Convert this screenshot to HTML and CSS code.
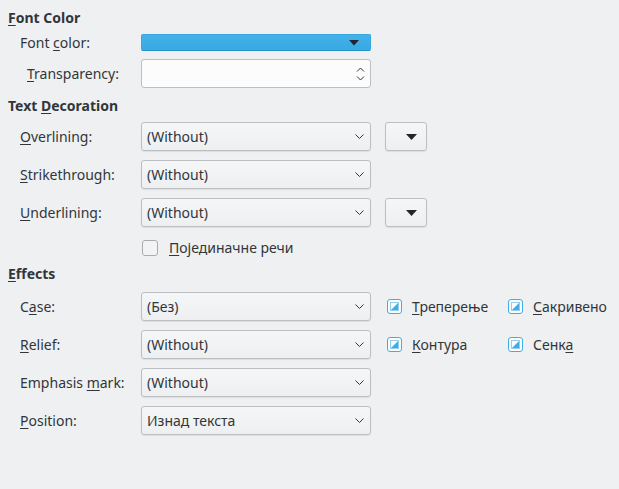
FILE: index.html
```html
<!DOCTYPE html>
<html>
<head>
<meta charset="utf-8">
<link rel="stylesheet" href="styles.css">
</head>
<body>
<div class="panel">
  <div class="heading h-first"><u>F</u>ont Color</div>
  <div class="row r-color">
    <span class="lbl">Font <u>c</u>olor:</span>
    <div class="colorbtn">
      <svg class="tri" width="10" height="6" viewBox="0 0 10 6"><path d="M0 0H10L5 5.5Z" fill="#232629"/></svg>
    </div>
  </div>
  <div class="row r-field r-trans">
    <span class="lbl lbl-indent"><u>T</u>ransparency:</span>
    <div class="spin">
      <svg class="spinarrows" width="9" height="16" viewBox="0 0 9 16"><path d="M1 5.5L4.5 2L8 5.5M1 10.5L4.5 14L8 10.5" fill="none" stroke="#31363b" stroke-width="1"/></svg>
    </div>
  </div>

  <div class="heading h-td">Text <u>D</u>ecoration</div>
  <div class="row r-field r-first">
    <span class="lbl"><u>O</u>verlining:</span>
    <div class="combo"><span class="val">(Without)</span><svg class="chev" width="9" height="5" viewBox="0 0 9 5"><path d="M0.5 0.5L4.5 4.5L8.5 0.5" fill="none" stroke="#31363b"/></svg></div>
    <div class="smallbtn"><svg width="11" height="6" viewBox="0 0 11 6"><path d="M0 0H11L5.5 6Z" fill="#232629"/></svg></div>
  </div>
  <div class="row r-field">
    <span class="lbl"><u>S</u>trikethrough:</span>
    <div class="combo"><span class="val">(Without)</span><svg class="chev" width="9" height="5" viewBox="0 0 9 5"><path d="M0.5 0.5L4.5 4.5L8.5 0.5" fill="none" stroke="#31363b"/></svg></div>
  </div>
  <div class="row r-field">
    <span class="lbl"><u>U</u>nderlining:</span>
    <div class="combo"><span class="val">(Without)</span><svg class="chev" width="9" height="5" viewBox="0 0 9 5"><path d="M0.5 0.5L4.5 4.5L8.5 0.5" fill="none" stroke="#31363b"/></svg></div>
    <div class="smallbtn"><svg width="11" height="6" viewBox="0 0 11 6"><path d="M0 0H11L5.5 6Z" fill="#232629"/></svg></div>
  </div>
  <div class="row r-check">
    <span class="lbl"></span>
    <span class="cb"></span>
    <span class="cblabel"><u>П</u>ојединачне речи</span>
  </div>

  <div class="heading h-eff"><u>E</u>ffects</div>
  <div class="row r-field r-first2">
    <span class="lbl">C<u>a</u>se:</span>
    <div class="combo"><span class="val">(Без)</span><svg class="chev" width="9" height="5" viewBox="0 0 9 5"><path d="M0.5 0.5L4.5 4.5L8.5 0.5" fill="none" stroke="#31363b"/></svg></div>
    <div class="checks">
      <span class="chk"><svg class="tri-cb" width="15" height="15" viewBox="0 0 15 15"><rect x="0.5" y="0.5" width="14" height="14" rx="2.5" fill="#fcfcfc" stroke="#3daee9"/><rect x="3.5" y="3.5" width="8" height="8" fill="none" stroke="#93cef0" stroke-width="1"/><path d="M4 11L11 11L11 4Z" fill="#3daee9"/></svg><span class="cbt"><u>Т</u>реперење</span></span>
      <span class="chk"><svg class="tri-cb" width="15" height="15" viewBox="0 0 15 15"><rect x="0.5" y="0.5" width="14" height="14" rx="2.5" fill="#fcfcfc" stroke="#3daee9"/><rect x="3.5" y="3.5" width="8" height="8" fill="none" stroke="#93cef0" stroke-width="1"/><path d="M4 11L11 11L11 4Z" fill="#3daee9"/></svg><span class="cbt"><u>С</u>акривено</span></span>
    </div>
  </div>
  <div class="row r-field">
    <span class="lbl"><u>R</u>elief:</span>
    <div class="combo"><span class="val">(Without)</span><svg class="chev" width="9" height="5" viewBox="0 0 9 5"><path d="M0.5 0.5L4.5 4.5L8.5 0.5" fill="none" stroke="#31363b"/></svg></div>
    <div class="checks">
      <span class="chk"><svg class="tri-cb" width="15" height="15" viewBox="0 0 15 15"><rect x="0.5" y="0.5" width="14" height="14" rx="2.5" fill="#fcfcfc" stroke="#3daee9"/><rect x="3.5" y="3.5" width="8" height="8" fill="none" stroke="#93cef0" stroke-width="1"/><path d="M4 11L11 11L11 4Z" fill="#3daee9"/></svg><span class="cbt"><u>К</u>онтура</span></span>
      <span class="chk"><svg class="tri-cb" width="15" height="15" viewBox="0 0 15 15"><rect x="0.5" y="0.5" width="14" height="14" rx="2.5" fill="#fcfcfc" stroke="#3daee9"/><rect x="3.5" y="3.5" width="8" height="8" fill="none" stroke="#93cef0" stroke-width="1"/><path d="M4 11L11 11L11 4Z" fill="#3daee9"/></svg><span class="cbt">Сенк<u>а</u></span></span>
    </div>
  </div>
  <div class="row r-field">
    <span class="lbl">Emphasis <u>m</u>ark:</span>
    <div class="combo"><span class="val">(Without)</span><svg class="chev" width="9" height="5" viewBox="0 0 9 5"><path d="M0.5 0.5L4.5 4.5L8.5 0.5" fill="none" stroke="#31363b"/></svg></div>
  </div>
  <div class="row r-field">
    <span class="lbl"><u>P</u>osition:</span>
    <div class="combo"><span class="val">Изнад текста</span><svg class="chev" width="9" height="5" viewBox="0 0 9 5"><path d="M0.5 0.5L4.5 4.5L8.5 0.5" fill="none" stroke="#31363b"/></svg></div>
  </div>
</div>
</body>
</html>
```

FILE: styles.css
```css
html, body {
  margin: 0;
  padding: 0;
  background: #eff0f1;
}
body {
  width: 619px;
  height: 489px;
  overflow: hidden;
  font-family: "Noto Sans", "Open Sans", sans-serif;
  font-size: 14px;
  color: #31363b;
}
u {
  text-decoration: underline;
  text-decoration-thickness: 1px;
  text-underline-offset: 2px;
}
.panel {
  display: flex;
  flex-direction: column;
}
.heading {
  height: 20px;
  line-height: 20px;
  padding-left: 8px;
  font-weight: bold;
}
.h-first { margin-top: 8px; }
.h-td { margin-top: 8px; }
.h-eff { margin-top: 7px; }

.row {
  display: flex;
  align-items: center;
  padding-left: 20px;
}
.lbl {
  width: 121px;
  flex: none;
  white-space: nowrap;
}
.lbl-indent { padding-left: 7px; box-sizing: border-box; }

.r-color { margin-top: 6px; height: 17px; }
.r-field { margin-top: 9px; height: 29px; }
.r-trans { margin-top: 8px; }
.r-first { margin-top: 6px; }
.r-first2 { margin-top: 8px; }
.r-check { margin-top: 11px; height: 19px; }

.colorbtn {
  width: 230px;
  height: 17px;
  box-sizing: border-box;
  border-radius: 2px;
  background: linear-gradient(#44b2eb, #37a8e2);
  border: 1px solid #3aa6de;
  border-bottom-color: #2b8fc4;
  display: flex;
  align-items: center;
  justify-content: flex-end;
  padding-right: 11px;
}
.spin {
  width: 230px;
  height: 29px;
  box-sizing: border-box;
  border: 1px solid #bcbebf;
  border-radius: 3px;
  background: #fcfcfc;
  display: flex;
  align-items: center;
  justify-content: flex-end;
  padding-right: 5px;
}
.combo {
  width: 230px;
  height: 29px;
  flex: none;
  box-sizing: border-box;
  border: 1px solid #bcbebf;
  border-radius: 3px;
  background: linear-gradient(#f5f6f7, #edeff0);
  box-shadow: 0 1px 1px rgba(0,0,0,0.08);
  display: flex;
  align-items: center;
  justify-content: space-between;
  padding-left: 5px;
  padding-right: 6px;
}
.val { white-space: nowrap; }
.chev { display: block; }
.smallbtn {
  margin-left: 14px;
  width: 42px;
  height: 29px;
  box-sizing: border-box;
  border: 1px solid #bcbebf;
  border-radius: 3px;
  background: linear-gradient(#f5f6f7, #edeff0);
  box-shadow: 0 1px 1px rgba(0,0,0,0.08);
  display: flex;
  align-items: center;
  justify-content: flex-end;
  padding-right: 9px;
}
.smallbtn svg { display: block; }

.cb {
  width: 16px;
  height: 16px;
  box-sizing: border-box;
  border: 1px solid #a9acaf;
  border-radius: 3px;
  background: #f2f3f4;
  margin-left: 1px;
  flex: none;
}
.cblabel {
  margin-left: 11px;
}
.checks {
  display: flex;
  align-items: center;
  margin-left: 16px;
}
.chk {
  display: flex;
  align-items: center;
  width: 121px;
  white-space: nowrap;
}
.tri-cb { display: block; flex: none; }
.cbt { margin-left: 10px; }
```
